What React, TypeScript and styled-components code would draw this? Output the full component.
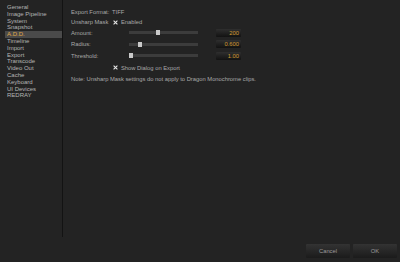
import styled, { createGlobalStyle } from "styled-components";

const GlobalStyle = createGlobalStyle`
  html, body {
    margin: 0;
    padding: 0;
    background: #232323;
  }
  body {
    font-family: "Liberation Sans", Arial, sans-serif;
  }
`;

const Window = styled.div`
  width: 400px;
  height: 262px;
  display: flex;
  flex-direction: column;
  background: #232323;
  overflow: hidden;
`;

const Body = styled.div`
  display: flex;
  height: 237px;
`;

const Sidebar = styled.ul`
  list-style: none;
  margin: 0;
  padding: 4px 0 0 5px;
  width: 57px;
  border-right: 1px solid #131313;
  box-sizing: content-box;
`;

const NavItem = styled.li<{ $active?: boolean }>`
  height: 6.8px;
  line-height: 6.8px;
  padding-left: 2px;
  font-size: 6px;
  white-space: nowrap;
  color: ${(p) => (p.$active ? "#e2a847" : "#b4b4b4")};
  background: ${(p) => (p.$active ? "#4a4a4a" : "transparent")};
`;

const Content = styled.div`
  flex: 1;
  display: flex;
  flex-direction: column;
  padding: 7px 0 0 8px;
  font-size: 5.8px;
  color: #a9a9a9;
`;

const Row = styled.div<{ $h: number; $indent?: number }>`
  display: flex;
  align-items: center;
  height: ${(p) => p.$h}px;
  padding-left: ${(p) => p.$indent || 0}px;
  white-space: nowrap;
`;

const Label = styled.span<{ $w: number }>`
  width: ${(p) => p.$w}px;
  flex-shrink: 0;
`;

const Check = styled.span`
  display: inline-flex;
  width: 5px;
  height: 5px;
  margin-right: 3px;
`;

const Track = styled.div`
  position: relative;
  width: 69px;
  height: 3px;
  background: #3c3c3c;
`;

const Thumb = styled.div`
  position: absolute;
  top: -1px;
  width: 4px;
  height: 5px;
  background: #c9c9c9;
`;

const ValueBox = styled.div`
  margin-left: 18px;
  width: 25px;
  height: 8px;
  box-sizing: border-box;
  padding-right: 2px;
  line-height: 8px;
  text-align: right;
  color: #d49b32;
  border-radius: 1px;
  background: linear-gradient(#2f2f2f, #121212);
`;

const Footer = styled.div`
  display: flex;
  justify-content: flex-end;
  gap: 3px;
  padding: 7px 3px 0 0;
`;

const Button = styled.button`
  width: 44px;
  height: 14px;
  padding: 0;
  border: none;
  border-radius: 1px;
  font-family: "Liberation Sans", Arial, sans-serif;
  font-size: 5.8px;
  color: #9c9c9c;
  background: linear-gradient(#333333, #1b1b1b);
`;

const nav = [
  "General",
  "Image Pipeline",
  "System",
  "Snapshot",
  "A.D.D.",
  "Timeline",
  "Import",
  "Export",
  "Transcode",
  "Video Out",
  "Cache",
  "Keyboard",
  "UI Devices",
  "REDRAY",
];

const sliders = [
  { label: "Amount:", pos: 27, value: "200" },
  { label: "Radius:", pos: 9, value: "0.600" },
  { label: "Threshold:", pos: 0, value: "1.00" },
];

function CheckMark() {
  return (
    <Check>
      <svg width="5" height="5" viewBox="0 0 5 5">
        <path d="M0.6 0.6 L4.4 4.4 M4.4 0.6 L0.6 4.4" stroke="#e6e6e6" strokeWidth="1.1" />
      </svg>
    </Check>
  );
}

export default function App() {
  return (
    <Window>
      <GlobalStyle />
      <Body>
        <Sidebar>
          {nav.map((n) => (
            <NavItem key={n} $active={n === "A.D.D."}>
              {n}
            </NavItem>
          ))}
        </Sidebar>
        <Content>
          <Row $h={10}>
            <Label $w={41}>Export Format:</Label>
            TIFF
          </Row>
          <Row $h={10}>
            <Label $w={42}>Unsharp Mask</Label>
            <CheckMark />
            Enabled
          </Row>
          {sliders.map((s) => (
            <Row $h={11.5} key={s.label}>
              <Label $w={58}>{s.label}</Label>
              <Track>
                <Thumb style={{ left: s.pos }} />
              </Track>
              <ValueBox>{s.value}</ValueBox>
            </Row>
          ))}
          <Row $h={12} $indent={42}>
            <CheckMark />
            Show Dialog on Export
          </Row>
          <Row $h={11}>Note: Unsharp Mask settings do not apply to Dragon Monochrome clips.</Row>
        </Content>
      </Body>
      <Footer>
        <Button>Cancel</Button>
        <Button>OK</Button>
      </Footer>
    </Window>
  );
}
